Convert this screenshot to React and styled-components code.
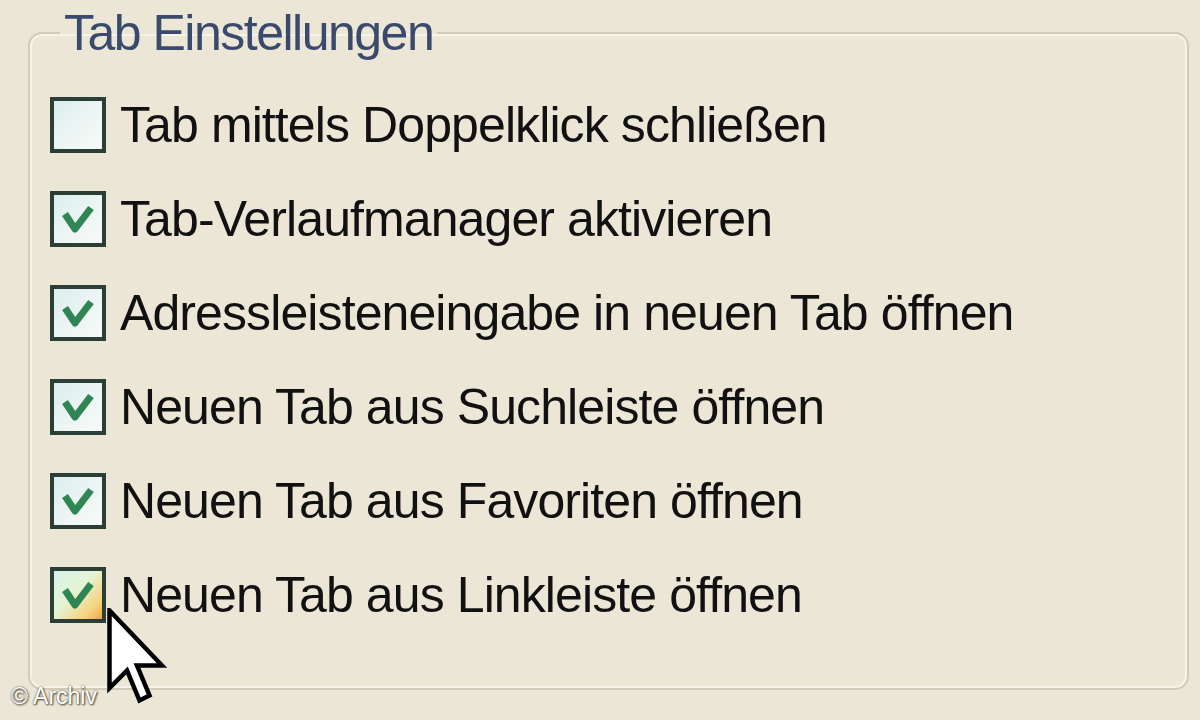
import React from "react";
import styled, { createGlobalStyle } from "styled-components";

const Global = createGlobalStyle`
  html, body {
    margin: 0;
    padding: 0;
    background: #ece6d6;
  }
`;

const Page = styled.div`
  position: relative;
  width: 1200px;
  height: 720px;
  box-sizing: border-box;
  padding: 8px 11px 30px 28px;
  background: #ece6d6;
  overflow: hidden;
  font-family: "Liberation Sans", Arial, sans-serif;
`;

const GroupBox = styled.fieldset`
  margin: 0;
  height: 100%;
  box-sizing: border-box;
  border: 2px solid #d2cbb7;
  border-radius: 14px;
  box-shadow: inset 0 0 0 2px #f6f3ea;
  padding: 0 0 0 20px;
`;

const Legend = styled.legend`
  margin-left: 10px;
  padding: 0 4px;
  font-size: 50px;
  line-height: 50px;
  letter-spacing: -1.5px;
  color: #3a4a6c;
`;

const List = styled.div`
  display: flex;
  flex-direction: column;
  margin-top: 20px;
`;

const Row = styled.label`
  display: flex;
  align-items: center;
  height: 94px;
  gap: 14px;
`;

const Box = styled.span`
  display: flex;
  align-items: center;
  justify-content: center;
  width: 56px;
  height: 56px;
  box-sizing: border-box;
  border: 4px solid #2c3f37;
  background: ${(p) =>
    p.hover
      ? "linear-gradient(135deg, #d8f3ea 0%, #e4f4d4 45%, #f6d27a 80%, #f0a44a 100%)"
      : "linear-gradient(135deg, #dbeeee 0%, #eef6f4 60%, #f7faf8 100%)"};
`;

const Text = styled.span`
  font-size: 50px;
  line-height: 50px;
  letter-spacing: -0.9px;
  color: #111;
  white-space: nowrap;
`;

const Cursor = styled.svg`
  position: absolute;
  left: 107px;
  top: 608px;
`;

const Credit = styled.div`
  position: absolute;
  left: 11px;
  top: 683px;
  font-size: 23px;
  color: #fff;
  text-shadow: 0 0 2px #4a4536, 1px 1px 2px #4a4536;
`;

const Check = () => (
  <svg width="36" height="36" viewBox="0 0 36 36">
    <path
      d="M5 13 L15 28 L31 7"
      fill="none"
      stroke="#2f8553"
      strokeWidth="7"
      strokeLinejoin="round"
    />
  </svg>
);

const items = [
  { label: "Tab mittels Doppelklick schließen", checked: false },
  { label: "Tab-Verlaufmanager aktivieren", checked: true },
  { label: "Adressleisteneingabe in neuen Tab öffnen", checked: true },
  { label: "Neuen Tab aus Suchleiste öffnen", checked: true },
  { label: "Neuen Tab aus Favoriten öffnen", checked: true },
  { label: "Neuen Tab aus Linkleiste öffnen", checked: true, hover: true },
];

const App = () => {
  return (
    <>
      <Global />
      <Page>
        <GroupBox>
          <Legend>Tab Einstellungen</Legend>
          <List>
            {items.map((item, i) => (
              <Row key={i}>
                <Box hover={item.hover}>{item.checked && <Check />}</Box>
                <Text>{item.label}</Text>
              </Row>
            ))}
          </List>
        </GroupBox>
        <Cursor width="60" height="100" viewBox="0 0 12 20">
          <path
            d="M0.5 0.5 L0.5 16 L4 12.5 L6.5 18.5 L8.5 17.5 L6 11.5 L11 11.5 Z"
            fill="#fff"
            stroke="#000"
            strokeWidth="0.9"
            strokeLinejoin="miter"
          />
        </Cursor>
        <Credit>© Archiv</Credit>
      </Page>
    </>
  );
};

export default App;
